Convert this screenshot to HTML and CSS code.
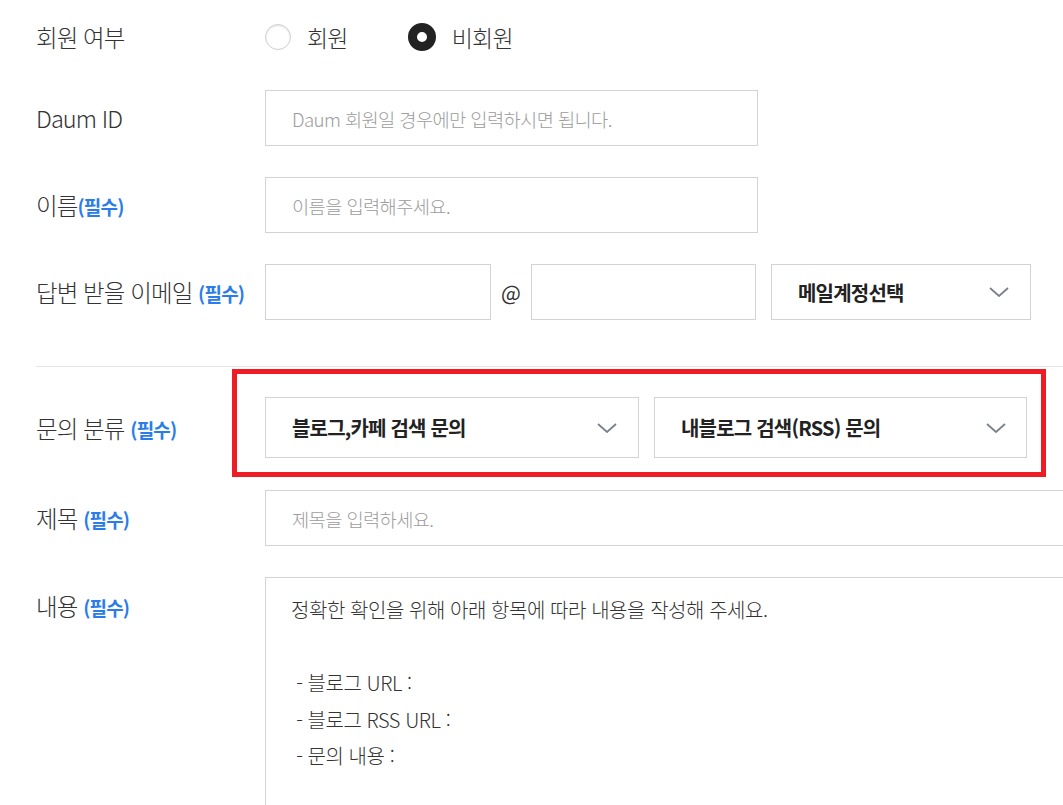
FILE: index.html
```html
<!DOCTYPE html>
<html lang="ko">
<head>
<meta charset="utf-8">
<title>문의하기</title>
<link rel="stylesheet" href="styles.css">
</head>
<body>
<form class="form">
  <div class="row row-radio">
    <div class="label">회원 여부</div>
    <div class="field radios">
      <label class="radio"><span class="dot"></span><span>회원</span></label>
      <label class="radio checked"><span class="dot"></span><span>비회원</span></label>
    </div>
  </div>
  <div class="row">
    <div class="label">Daum ID</div>
    <div class="field"><input class="input w-mid" type="text" placeholder="Daum 회원일 경우에만 입력하시면 됩니다."></div>
  </div>
  <div class="row">
    <div class="label">이름<span class="req">(필수)</span></div>
    <div class="field"><input class="input w-mid" type="text" placeholder="이름을 입력해주세요."></div>
  </div>
  <div class="row row-email">
    <div class="label">답변 받을 이메일 <span class="req">(필수)</span></div>
    <div class="field email">
      <input class="input w-mail" type="text">
      <span class="at">@</span>
      <input class="input w-mail2" type="text">
      <div class="select w-domain"><span>메일계정선택</span><svg class="chev" viewBox="0 0 20 10" width="20" height="10"><path d="M1 1 L10 9 L19 1" fill="none" stroke="#7a808a" stroke-width="1.8"/></svg></div>
    </div>
  </div>
  <div class="section">
    <div class="row row-cat">
      <div class="label">문의 분류 <span class="req">(필수)</span></div>
      <div class="field cats">
        <div class="select w-cat1"><span>블로그,카페 검색 문의</span><svg class="chev" viewBox="0 0 20 10" width="20" height="10"><path d="M1 1 L10 9 L19 1" fill="none" stroke="#7a808a" stroke-width="1.8"/></svg></div>
        <div class="select w-cat2"><span>내블로그 검색(RSS) 문의</span><svg class="chev" viewBox="0 0 20 10" width="20" height="10"><path d="M1 1 L10 9 L19 1" fill="none" stroke="#7a808a" stroke-width="1.8"/></svg></div>
        <div class="highlight"></div>
      </div>
    </div>
    <div class="row">
      <div class="label">제목 <span class="req">(필수)</span></div>
      <div class="field"><input class="input w-full" type="text" placeholder="제목을 입력하세요."></div>
    </div>
    <div class="row row-content">
      <div class="label">내용 <span class="req">(필수)</span></div>
      <div class="field"><div class="textarea">정확한 확인을 위해 아래 항목에 따라 내용을 작성해 주세요.

 - 블로그 URL :
 - 블로그 RSS URL :
 - 문의 내용 :</div></div>
    </div>
  </div>
</form>
</body>
</html>
```
FILE: styles.css
```css
html, body {
  margin: 0;
  padding: 0;
  background: #fff;
  overflow: hidden;
}
body {
  font-family: "Noto Sans CJK KR", "Noto Sans", sans-serif;
  color: #333;
  width: 1063px;
  height: 805px;
}
.form {
  padding: 14px 0 0 36px;
  width: 1200px;
}
.row {
  display: grid;
  grid-template-columns: 229px 1fr;
  align-items: center;
  min-height: 56px;
  margin-bottom: 31px;
}
.label {
  font-size: 23.5px;
  font-weight: 300;
  letter-spacing: -0.9px;
  color: #333;
  white-space: nowrap;
}
.req {
  font-size: 19px;
  font-weight: 700;
  color: #2a7de8;
  letter-spacing: -0.8px;
}
.row-radio {
  min-height: 46px;
  margin-bottom: 30px;
}
.radios {
  display: flex;
  align-items: center;
  gap: 60px;
}
.radio {
  display: flex;
  align-items: center;
  gap: 16px;
  font-size: 23px;
  font-weight: 300;
  letter-spacing: -0.8px;
}
.dot {
  width: 26px;
  height: 26px;
  border-radius: 50%;
  border: 1px solid #cfcfcf;
  box-shadow: inset 0 1px 2px rgba(0,0,0,0.12);
  box-sizing: border-box;
  background: #fff;
}
.radio.checked .dot {
  border: 9px solid #222;
  box-shadow: none;
  width: 28px;
  height: 28px;
}
.input {
  height: 56px;
  box-sizing: border-box;
  border: 1px solid #d3d3d3;
  padding: 0 0 0 26px;
  font-family: inherit;
  font-size: 18.7px;
  font-weight: 300;
  letter-spacing: -0.6px;
  color: #333;
  background: #fff;
  outline: none;
  display: block;
}
.input::placeholder {
  color: #9c9c9c;
}
.w-mid { width: 493px; }
.w-full { width: 860px; }
.w-mail { width: 226px; }
.w-mail2 { width: 225px; }
.email {
  display: flex;
  align-items: center;
}
.at {
  width: 40px;
  text-align: center;
  font-size: 21px;
  color: #333;
}
.select {
  box-sizing: border-box;
  border: 1px solid #d3d3d3;
  height: 56px;
  display: flex;
  align-items: center;
  justify-content: space-between;
  padding: 0 21px 0 26px;
  font-size: 20px;
  font-weight: 700;
  letter-spacing: -0.8px;
  color: #222;
  background: #fff;
}
.w-domain { width: 260px; margin-left: 15px; }
.row-email { margin-bottom: 46px; }
.section {
  border-top: 1px solid #e6e6e6;
  padding-top: 30px;
}
.row-cat { margin-bottom: 32px; }
.cats {
  display: flex;
  gap: 15px;
  position: relative;
}
.cats .select { height: 61px; }
.w-cat1 { width: 374px; }
.w-cat2 { width: 373px; padding-right: 20px; }
.highlight {
  position: absolute;
  left: -33px;
  top: -28px;
  width: 814px;
  height: 108px;
  box-sizing: border-box;
  border: 5px solid #ee1d25;
  pointer-events: none;
}
.row-content {
  align-items: start;
}
.row-content .label {
  padding-top: 12px;
}
.textarea {
  box-sizing: border-box;
  width: 860px;
  height: 300px;
  border: 1px solid #d3d3d3;
  padding: 14px 25px;
  font-size: 20px;
  font-weight: 300;
  line-height: 36.5px;
  letter-spacing: -0.45px;
  white-space: pre-wrap;
  color: #333;
}
```
